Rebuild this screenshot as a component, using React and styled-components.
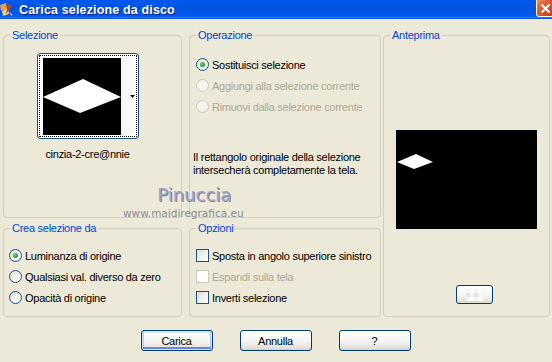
import React from "react";
import styled, { createGlobalStyle, css } from "styled-components";

const GlobalStyle = createGlobalStyle`
  html, body {
    margin: 0;
    padding: 0;
    background: #ece9d8;
  }
  body {
    font-family: "Liberation Sans", Arial, sans-serif;
    font-size: 11px;
    letter-spacing: -0.27px;
    color: #000;
  }
`;

const Window = styled.div`
  position: relative;
  width: 552px;
  height: 362px;
  display: flex;
  flex-direction: column;
  background: #ece9d8;
  overflow: hidden;
`;

const TitleBar = styled.div`
  height: 19px;
  display: flex;
  align-items: center;
  background: linear-gradient(180deg, #0058ee 0%, #0054e3 45%, #0058f0 85%, #2a78f4 94%, #0040c8 100%);
`;

const Title = styled.div`
  color: #fff;
  font-weight: bold;
  font-size: 12.5px;
  margin-left: 5px;
  text-shadow: 1px 1px 0 #0a1c8a;
  letter-spacing: 0.15px;
`;

const CloseBtn = styled.div`
  margin-left: auto;
  margin-right: -5px;
  align-self: flex-start;
  margin-top: -4px;
  width: 21px;
  height: 21px;
  box-sizing: border-box;
  border: 1px solid #fff;
  border-radius: 3px;
  background: linear-gradient(135deg, #f09a7a 0%, #e35a30 40%, #c43a10 100%);
  display: flex;
  align-items: center;
  justify-content: center;
  padding-top: 3px;
  padding-right: 3px;
`;

const Body = styled.div`
  padding: 10px 2px 0 3px;
  display: flex;
  flex-direction: column;
`;

const Panels = styled.div`
  display: flex;
  gap: 2px;
`;

const LeftGrid = styled.div`
  display: grid;
  grid-template-columns: 179px 192px;
  grid-template-rows: 189px 95px;
  column-gap: 7px;
  row-gap: 4px;
`;

const Group = styled.fieldset`
  margin: 0;
  padding: 0;
  min-width: 0;
  box-sizing: border-box;
  border: 1px solid #d0d0bf;
  border-radius: 4px;
  ${(p) => p.$w && css`width: ${p.$w}px;`}
`;

const Legend = styled.legend`
  color: #0046d5;
  font-size: 11px;
  line-height: 13px;
  padding: 0 2px;
  margin-left: 6px;
`;

const SelBody = styled.div`
  display: flex;
  flex-direction: column;
  align-items: center;
  padding: 11px 10px 0 0;
`;

const Thumb = styled.div`
  width: 102px;
  height: 86px;
  box-sizing: border-box;
  border: 1px solid #1e4f85;
  border-radius: 3px;
  background: #fff;
  padding: 1px;
  display: flex;
`;

const FocusRect = styled.div`
  flex: 1;
  display: flex;
  border: 1px dotted #000;
  padding: 1px 0 1px 3px;
`;

const ThumbImage = styled.div`
  width: 78px;
  height: 77px;
  background: #000;
  align-self: center;
`;

const ArrowStrip = styled.div`
  flex: 1;
  display: flex;
  align-items: center;
  justify-content: flex-end;
  padding-right: 1px;
  background: linear-gradient(90deg, #f4f4f4, #fcfcfc);
`;

const FileName = styled.div`
  margin-top: 9px;
  line-height: 13px;
  font-size: 11px;
`;

const OptBody = styled.div`
  display: flex;
  flex-direction: column;
  padding: ${(p) => p.$top}px 0 0 ${(p) => p.$left}px;
`;

const Row = styled.div`
  height: 21px;
  display: flex;
  align-items: center;
  gap: 3px;
  color: ${(p) => (p.$disabled ? "#aca899" : "#000")};
  white-space: nowrap;
`;

const Radio = styled.span`
  width: 13px;
  height: 13px;
  box-sizing: border-box;
  border-radius: 50%;
  border: 1px solid ${(p) => (p.$disabled ? "#cac8bb" : "#1c5180")};
  background: ${(p) =>
    p.$disabled ? "#f4f3ee" : "linear-gradient(135deg, #dcd9cf 0%, #f4f3ee 50%, #ffffff 100%)"};
  display: flex;
  align-items: center;
  justify-content: center;
  flex-shrink: 0;
  &::after {
    content: "";
    display: ${(p) => (p.$checked ? "block" : "none")};
    width: 5px;
    height: 5px;
    border-radius: 50%;
    background: radial-gradient(circle at 40% 40%, #6fe06f 0%, #21a121 60%, #0e7a0e 100%);
  }
`;

const Check = styled.span`
  width: 13px;
  height: 13px;
  box-sizing: border-box;
  border: 1px solid ${(p) => (p.$disabled ? "#cac8bb" : "#1c5180")};
  background: ${(p) =>
    p.$disabled ? "#ffffff" : "linear-gradient(135deg, #dcdcd7 0%, #f2f2ee 55%, #ffffff 100%)"};
  flex-shrink: 0;
`;

const Info = styled.div`
  margin: 34px 0 0 -3px;
  line-height: 13px;
`;

const PreviewBody = styled.div`
  display: flex;
  flex-direction: column;
  padding-top: 88px;
`;

const PreviewBox = styled.div`
  margin: 0 auto;
  width: 141px;
  height: 99px;
  background: #000;
`;

const SmallButton = styled.div`
  margin: 56px 0 0 72px;
  width: 37px;
  height: 19px;
  box-sizing: border-box;
  border: 1px solid #003c74;
  border-radius: 3px;
  background: linear-gradient(180deg, #ffffff 0%, #f3f3ef 60%, #dcd8ce 100%);
  display: flex;
  align-items: center;
  justify-content: center;
`;

const ButtonRow = styled.div`
  margin-top: 13px;
  display: flex;
  justify-content: center;
  gap: 27px;
  padding-right: 2px;
`;

const Button = styled.div`
  width: 72px;
  height: 21px;
  box-sizing: border-box;
  border: 1px solid #003c74;
  border-radius: 3px;
  background: linear-gradient(180deg, #ffffff 0%, #f5f4f0 55%, #e3e0d7 90%, #d6d0c5 100%);
  display: flex;
  align-items: center;
  justify-content: center;
  font-size: 11px;
  ${(p) =>
    p.$default &&
    css`
      box-shadow: inset 0 0 0 1px #cee7ff, inset 0 -2px 0 1px #6982ee, inset 2px 0 0 0 #a6caf0, inset -2px 0 0 0 #a6caf0, inset 0 2px 0 0 #cee7ff;
    `}
`;

const Watermark = styled.div`
  position: absolute;
  left: 123px;
  top: 184px;
  display: flex;
  flex-direction: column;
  align-items: center;
  pointer-events: none;
  letter-spacing: 0;
`;

const WmName = styled.div`
  font-family: "DejaVu Sans", sans-serif;
  font-size: 18px;
  line-height: 21px;
  color: #a3a5c4;
  text-shadow: 1px 1px 0 #7d7f9e;
  margin-left: 22px;
`;

const WmUrl = styled.div`
  font-family: "DejaVu Sans", sans-serif;
  font-size: 10.5px;
  line-height: 12px;
  color: #8b8b99;
  margin-top: 2px;
`;

function AppIcon() {
  return (
    <svg width="14" height="16" viewBox="0 0 14 16" style={{ marginTop: 1 }}>
      <path d="M0 3 L6 1 L7 7 L1 9 Z" fill="#e8a040" />
      <path d="M2 9 L8 6 L9 12 L3 14 Z" fill="#f0d070" />
      <path d="M8 2 L12 4 L6 12 Z" fill="#c04020" />
      <path d="M9 9 L13 13 L11 14 Z" fill="#80b0e0" />
    </svg>
  );
}

function Diamond({ w, h, pts }) {
  return (
    <svg width={w} height={h} viewBox={`0 0 ${w} ${h}`} style={{ display: "block" }}>
      <polygon points={pts} fill="#fff" />
    </svg>
  );
}

function Checker() {
  return (
    <svg width="18" height="12" viewBox="0 0 18 12">
      <rect x="0" y="0" width="18" height="12" fill="#f4f4f0" />
      <rect x="4" y="0" width="4" height="4" fill="#fff" />
      <rect x="12" y="0" width="4" height="4" fill="#fff" />
      <rect x="0" y="4" width="4" height="4" fill="#e4e4e0" />
      <rect x="8" y="4" width="4" height="4" fill="#e4e4e0" />
      <rect x="4" y="8" width="4" height="4" fill="#fff" />
      <rect x="12" y="8" width="4" height="4" fill="#fff" />
    </svg>
  );
}

export default function App() {
  return (
    <>
      <GlobalStyle />
      <Window>
        <TitleBar>
          <AppIcon />
          <Title>Carica selezione da disco</Title>
          <CloseBtn>
            <svg width="11" height="11" viewBox="0 0 11 11">
              <path d="M1.5 1.5 L9.5 9.5 M9.5 1.5 L1.5 9.5" stroke="#fff" strokeWidth="2" />
            </svg>
          </CloseBtn>
        </TitleBar>
        <Body>
          <Panels>
            <LeftGrid>
              <Group>
                <Legend>Selezione</Legend>
                <SelBody>
                  <Thumb>
                    <FocusRect>
                      <ThumbImage>
                        <Diamond w={78} h={77} pts="0,39 40,21 78,39 37,55" />
                      </ThumbImage>
                      <ArrowStrip>
                        <svg width="5" height="3" viewBox="0 0 5 3">
                          <path d="M0 0 H5 L2.5 3 Z" fill="#000" />
                        </svg>
                      </ArrowStrip>
                    </FocusRect>
                  </Thumb>
                  <FileName>cinzia-2-cre@nnie</FileName>
                </SelBody>
              </Group>
              <Group>
                <Legend>Operazione</Legend>
                <OptBody $top={12} $left={6}>
                  <Row>
                    <Radio $checked />
                    Sostituisci selezione
                  </Row>
                  <Row $disabled>
                    <Radio $disabled />
                    Aggiungi alla selezione corrente
                  </Row>
                  <Row $disabled>
                    <Radio $disabled />
                    Rimuovi dalla selezione corrente
                  </Row>
                  <Info>
                    Il rettangolo originale della selezione
                    <br />
                    intersecherà completamente la tela.
                  </Info>
                </OptBody>
              </Group>
              <Group>
                <Legend>Crea selezione da</Legend>
                <OptBody $top={10} $left={5}>
                  <Row>
                    <Radio $checked />
                    Luminanza di origine
                  </Row>
                  <Row>
                    <Radio />
                    Qualsiasi val. diverso da zero
                  </Row>
                  <Row>
                    <Radio />
                    Opacità di origine
                  </Row>
                </OptBody>
              </Group>
              <Group>
                <Legend>Opzioni</Legend>
                <OptBody $top={10} $left={6}>
                  <Row>
                    <Check />
                    Sposta in angolo superiore sinistro
                  </Row>
                  <Row $disabled>
                    <Check $disabled />
                    Espandi sulla tela
                  </Row>
                  <Row>
                    <Check />
                    Inverti selezione
                  </Row>
                </OptBody>
              </Group>
            </LeftGrid>
            <Group $w={168}>
              <Legend>Anteprima</Legend>
              <PreviewBody>
                <PreviewBox>
                  <Diamond w={141} h={99} pts="1,32 20,24 37,32 18,39" />
                </PreviewBox>
                <SmallButton>
                  <Checker />
                </SmallButton>
              </PreviewBody>
            </Group>
          </Panels>
          <ButtonRow>
            <Button $default>Carica</Button>
            <Button>Annulla</Button>
            <Button>?</Button>
          </ButtonRow>
        </Body>
        <Watermark>
          <WmName>Pinuccia</WmName>
          <WmUrl>www.maidiregrafica.eu</WmUrl>
        </Watermark>
      </Window>
    </>
  );
}
